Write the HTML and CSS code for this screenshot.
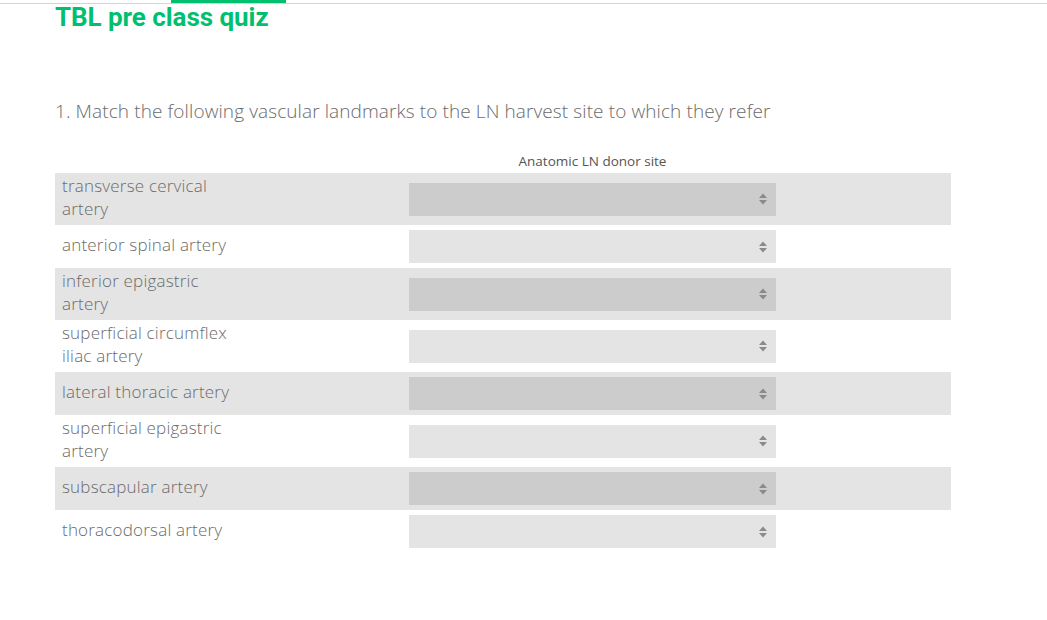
FILE: index.html
```html
<!DOCTYPE html>
<html lang="en">
<head>
<meta charset="utf-8">
<title>TBL pre class quiz</title>
<link rel="stylesheet" href="styles.css">
</head>
<body>
<div class="topbar"><div class="progress"></div></div>
<main class="page">
  <h1 class="title">TBL pre class quiz</h1>
  <h2 class="question">1. Match the following vascular landmarks to the LN harvest site to which they refer</h2>
  <div class="matrix">
    <div class="matrix-head">
      <span></span>
      <span class="col-head">Anatomic LN donor site</span>
      <span></span>
    </div>
    <div class="row shaded">
      <div class="label">transverse cervical artery</div>
      <div class="select"><svg class="arrows" viewBox="0 0 8 12" width="8" height="12"><path d="M4 0.5 L8 5 H0 Z M0 7 H8 L4 11.5 Z"/></svg></div>
    </div>
    <div class="row">
      <div class="label">anterior spinal artery</div>
      <div class="select"><svg class="arrows" viewBox="0 0 8 12" width="8" height="12"><path d="M4 0.5 L8 5 H0 Z M0 7 H8 L4 11.5 Z"/></svg></div>
    </div>
    <div class="row shaded">
      <div class="label">inferior epigastric artery</div>
      <div class="select"><svg class="arrows" viewBox="0 0 8 12" width="8" height="12"><path d="M4 0.5 L8 5 H0 Z M0 7 H8 L4 11.5 Z"/></svg></div>
    </div>
    <div class="row">
      <div class="label">superficial circumflex iliac artery</div>
      <div class="select"><svg class="arrows" viewBox="0 0 8 12" width="8" height="12"><path d="M4 0.5 L8 5 H0 Z M0 7 H8 L4 11.5 Z"/></svg></div>
    </div>
    <div class="row shaded">
      <div class="label">lateral thoracic artery</div>
      <div class="select"><svg class="arrows" viewBox="0 0 8 12" width="8" height="12"><path d="M4 0.5 L8 5 H0 Z M0 7 H8 L4 11.5 Z"/></svg></div>
    </div>
    <div class="row">
      <div class="label">superficial epigastric artery</div>
      <div class="select"><svg class="arrows" viewBox="0 0 8 12" width="8" height="12"><path d="M4 0.5 L8 5 H0 Z M0 7 H8 L4 11.5 Z"/></svg></div>
    </div>
    <div class="row shaded">
      <div class="label">subscapular artery</div>
      <div class="select"><svg class="arrows" viewBox="0 0 8 12" width="8" height="12"><path d="M4 0.5 L8 5 H0 Z M0 7 H8 L4 11.5 Z"/></svg></div>
    </div>
    <div class="row">
      <div class="label">thoracodorsal artery</div>
      <div class="select"><svg class="arrows" viewBox="0 0 8 12" width="8" height="12"><path d="M4 0.5 L8 5 H0 Z M0 7 H8 L4 11.5 Z"/></svg></div>
    </div>
  </div>
</main>
</body>
</html>
```
FILE: styles.css
```css
html, body {
  margin: 0;
  padding: 0;
  background: #ffffff;
}

body {
  font-family: "Open Sans", "Liberation Sans", sans-serif;
  color: #6b6b6b;
}

.topbar {
  height: 3px;
  border-bottom: 1px solid #d4d4d4;
}

.progress {
  margin-left: 171px;
  width: 115px;
  height: 3px;
  background: #00bf6f;
}

.page {
  padding-left: 55px;
  width: 896px;
}

.title {
  margin: 0;
  font-family: "Roboto", "Liberation Sans", sans-serif;
  font-weight: 700;
  font-size: 26px;
  line-height: 26px;
  letter-spacing: -0.05px;
  color: #00bf6f;
}

.question {
  margin: 69px 0 0 0;
  font-weight: 300;
  font-size: 19px;
  line-height: 24px;
  letter-spacing: 0.1px;
  color: #6b6b6b;
}

.matrix {
  margin-top: 28px;
}

.matrix-head {
  display: grid;
  grid-template-columns: 354px 367px 175px;
  height: 20px;
  align-items: center;
  margin-bottom: 2px;
}

.col-head {
  text-align: center;
  font-size: 13.5px;
  color: #555555;
}

.row {
  display: grid;
  grid-template-columns: 354px 367px 175px;
  align-items: center;
  min-height: 43px;
}

.row.shaded {
  background: #e4e4e4;
}

.label {
  padding: 1px 7px 5px;
  max-width: 176px;
  font-size: 17px;
  line-height: 23px;
  letter-spacing: 0.2px;
  font-weight: 300;
  color: #6b6b6b;
}

.select {
  height: 33px;
  margin: 5px 0;
  background: #e4e4e4;
  display: flex;
  align-items: center;
  justify-content: flex-end;
  padding-right: 9px;
}

.row.shaded .select {
  background: #cccccc;
}

.arrows {
  fill: #8a8a8a;
}
```
